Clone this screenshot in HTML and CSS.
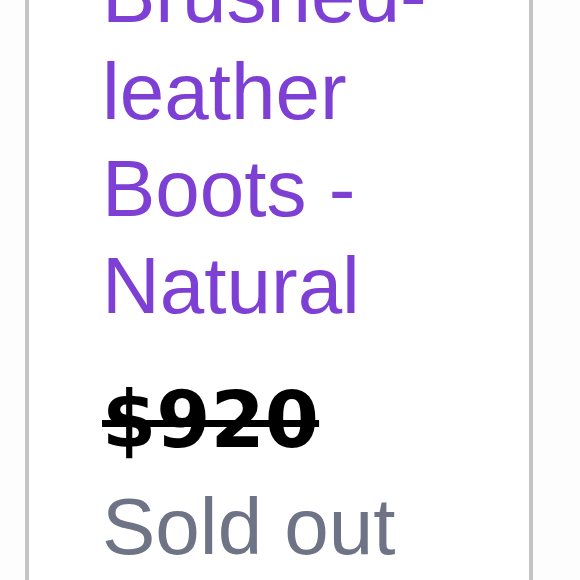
FILE: index.html
```html
<!DOCTYPE html>
<html lang="en">
<head>
<meta charset="utf-8">
<title>Product card</title>
<link rel="stylesheet" href="styles.css">
</head>
<body>
<div class="card">
  <div class="info">
    <a class="title" href="#">Brushed-leather Boots - Natural</a>
    <div class="price"><s>$920</s></div>
    <div class="status">Sold out</div>
  </div>
</div>
</body>
</html>
```

FILE: styles.css
```css
html, body {
  margin: 0;
  padding: 0;
  background: #fdfdfd;
  overflow: hidden;
}
.card {
  margin-left: 25px;
  width: 500px;
  height: 700px;
  border-left: 4px solid #c4c4c4;
  border-right: 4px solid #c4c4c4;
  background: #ffffff;
}
.info {
  padding: 0 90px 0 73px;
  margin-top: -54px;
  display: flex;
  flex-direction: column;
  font-family: "Liberation Sans", Arial, sans-serif;
  font-size: 80px;
  line-height: 97px;
}
.title {
  color: #7e40d4;
  text-decoration: none;
}
.price {
  margin-top: 38px;
  font-family: "DejaVu Sans", sans-serif;
  font-size: 78px;
  font-weight: bold;
  color: #000;
}
.price s {
  text-decoration-thickness: 7px;
}
.status {
  margin-top: 9px;
  color: #6e7385;
}
```
